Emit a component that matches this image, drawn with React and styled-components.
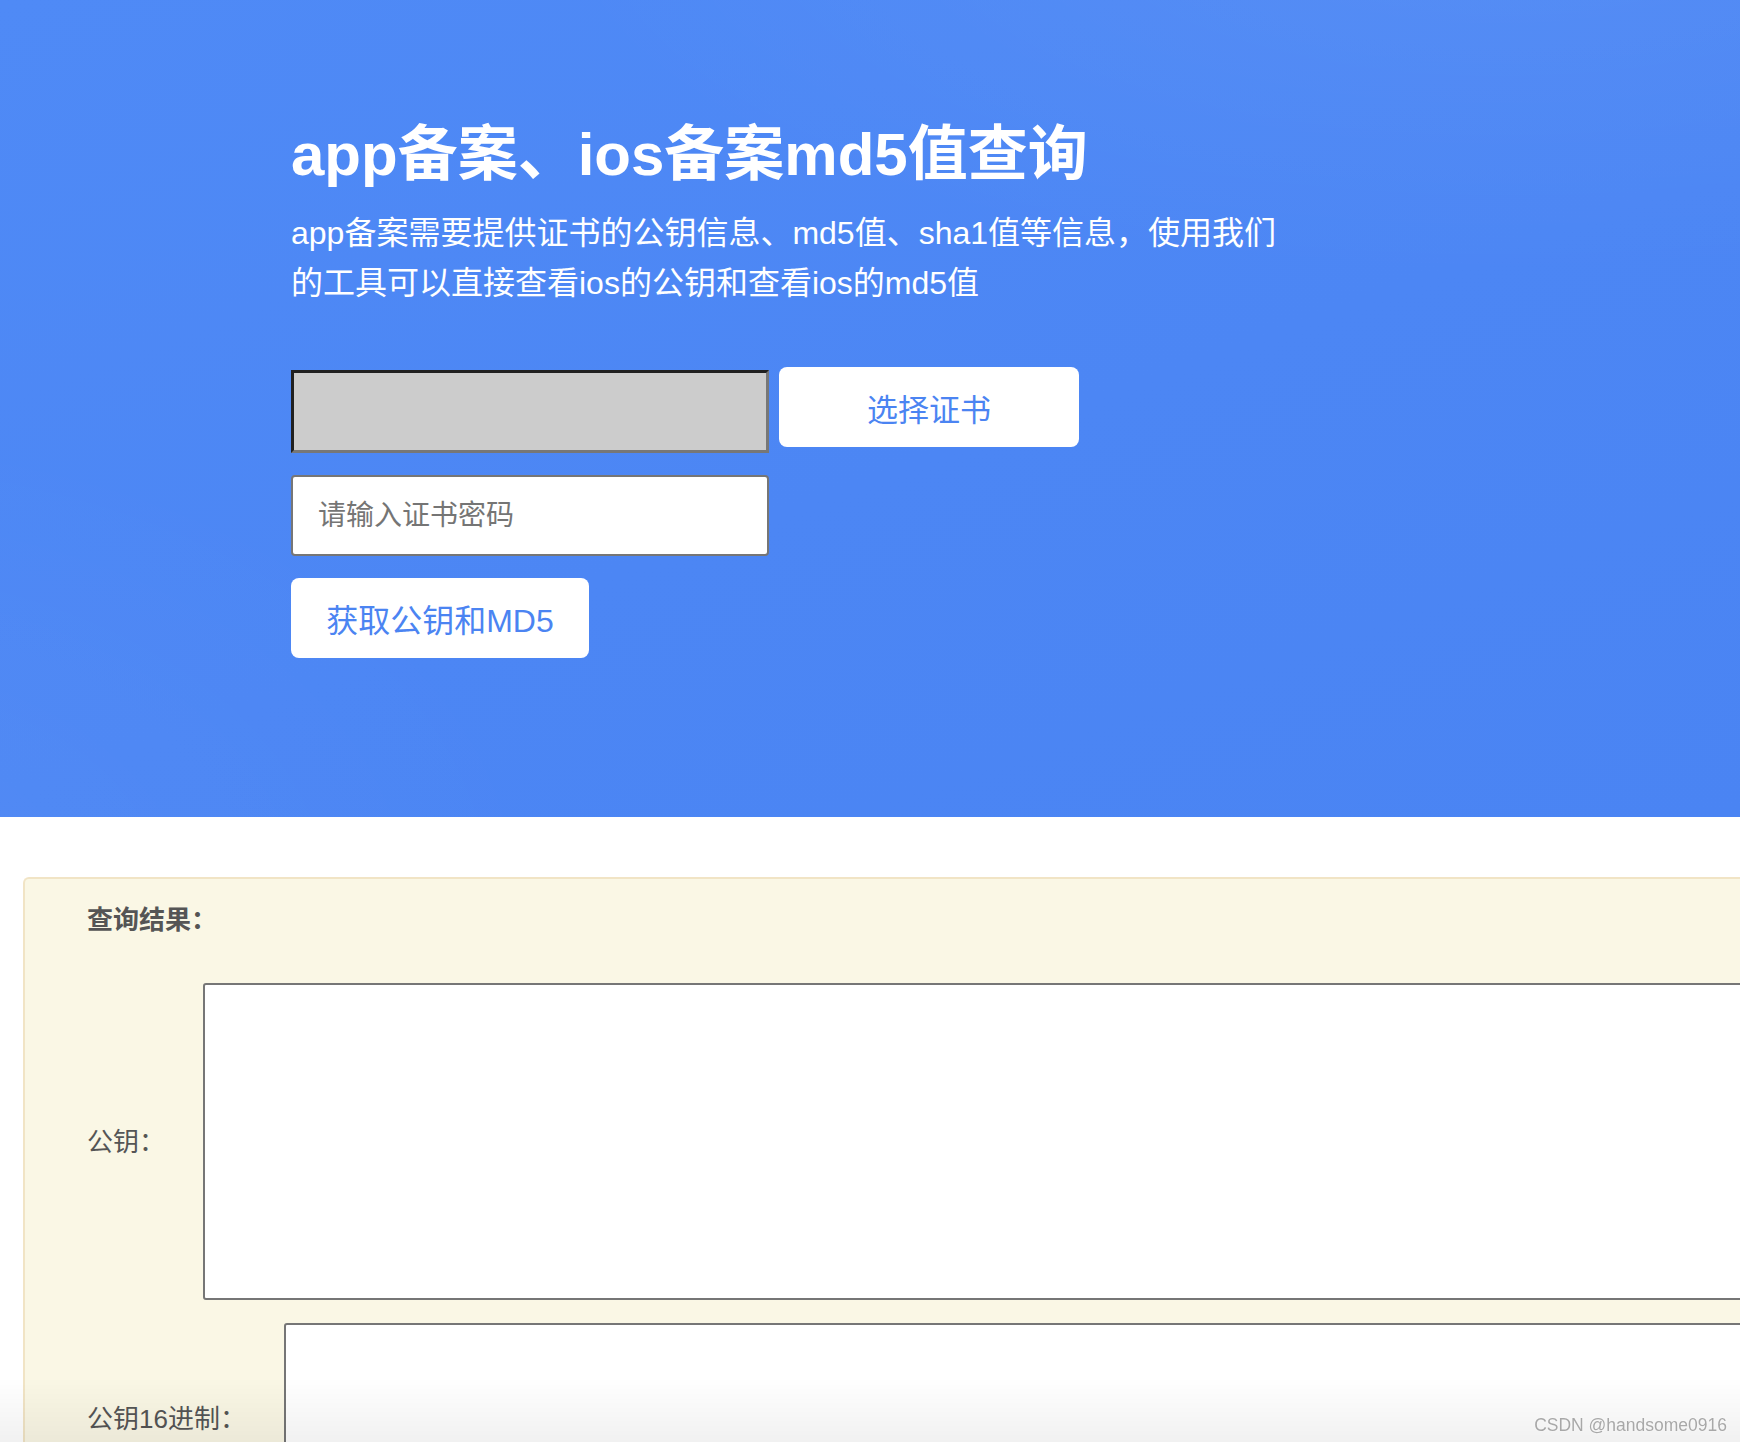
import React from "react";
import styled, { createGlobalStyle } from "styled-components";

const GlobalStyle = createGlobalStyle`
  html, body {
    margin: 0;
    padding: 0;
    overflow: hidden;
    background: #ffffff;
  }
  body {
    font-family: "Liberation Sans", "Noto Sans CJK SC", sans-serif;
  }
  * {
    box-sizing: border-box;
  }
`;

const Hero = styled.section`
  background-color: #4c87f5;
  background-image:
    radial-gradient(ellipse 1400px 520px at 1500px -80px, rgba(255, 255, 255, 0.05), rgba(255, 255, 255, 0) 70%),
    radial-gradient(ellipse 1100px 700px at -200px 900px, rgba(255, 255, 255, 0.04), rgba(255, 255, 255, 0) 70%),
    linear-gradient(160deg, #4f8af6 0%, #4c86f4 55%, #4a84f3 100%);
  padding: 119px 0 160px 291px;
  height: 817px;
`;

const Title = styled.h1`
  margin: 0;
  font-size: 60px;
  line-height: 72px;
  font-weight: 700;
  color: #ffffff;
`;

const Intro = styled.p`
  margin: 17px 0 0;
  width: 1000px;
  font-size: 32px;
  line-height: 50px;
  color: #ffffff;
`;

const Form = styled.div`
  display: flex;
  flex-direction: column;
  align-items: flex-start;
  gap: 22px;
  margin-top: 59px;
`;

const FileRow = styled.div`
  display: flex;
  align-items: flex-start;
  gap: 10px;
`;

const FileBox = styled.div`
  width: 478px;
  height: 83px;
  margin-top: 3px;
  background: #cccccc;
  border-style: solid;
  border-width: 3px;
  border-color: #202020 #777777 #777777 #202020;
`;

const Button = styled.button`
  width: ${(p) => p.$width}px;
  height: 80px;
  border: none;
  border-radius: 8px;
  background: #ffffff;
  color: #4b84f2;
  font-family: "Liberation Sans", "Noto Sans CJK SC", sans-serif;
  font-size: ${(p) => p.$size || 31}px;
  padding: 0;
  cursor: pointer;
`;

const PasswordInput = styled.input`
  width: 478px;
  height: 81px;
  border: 2px solid #767676;
  border-radius: 4px;
  padding: 0 0 0 25px;
  font-family: "Liberation Sans", "Noto Sans CJK SC", sans-serif;
  font-size: 28px;
  color: #333333;
  outline: none;

  &::placeholder {
    color: #757575;
  }
`;

const Results = styled.section`
  margin: 60px 0 0 23px;
  width: 1900px;
  background: #faf7e5;
  border-top: 2px solid #f1e4c5;
  border-left: 2px solid #f1e4c5;
  border-top-left-radius: 6px;
  padding: 23px 0 40px 62px;
  display: flex;
  flex-direction: column;
  gap: 23px;
`;

const ResultsTitle = styled.div`
  font-size: 26px;
  line-height: 36px;
  font-weight: 700;
  color: #555555;
  margin-bottom: 22px;
`;

const Row = styled.div`
  display: flex;
  align-items: center;
  gap: 38px;
`;

const Label = styled.label`
  font-size: 26px;
  line-height: 36px;
  color: #555555;
  white-space: nowrap;
`;

const Output = styled.textarea`
  width: 1600px;
  height: ${(p) => p.$height}px;
  border: 2px solid #767676;
  border-radius: 3px;
  background: #ffffff;
  resize: none;
  outline: none;
  font-family: "Liberation Mono", monospace;
  font-size: 16px;
`;

const BottomFade = styled.div`
  position: fixed;
  left: 0;
  right: 0;
  bottom: 0;
  height: 64px;
  background: linear-gradient(to bottom, rgba(0, 0, 0, 0), rgba(0, 0, 0, 0.055));
  pointer-events: none;
`;

const Watermark = styled.div`
  position: absolute;
  right: 13px;
  bottom: 6px;
  font-family: "Liberation Sans", sans-serif;
  font-size: 17.5px;
  color: #a8a8a8;
  text-shadow: 0 0 1px #ffffff;
`;

export default function App() {
  return (
    <>
      <GlobalStyle />
      <Hero>
        <Title>app备案、ios备案md5值查询</Title>
        <Intro>
          app备案需要提供证书的公钥信息、md5值、sha1值等信息，使用我们的工具可以直接查看ios的公钥和查看ios的md5值
        </Intro>
        <Form>
          <FileRow>
            <FileBox />
            <Button $width={300}>选择证书</Button>
          </FileRow>
          <PasswordInput type="password" placeholder="请输入证书密码" />
          <Button $width={298} $size={32}>获取公钥和MD5</Button>
        </Form>
      </Hero>
      <Results>
        <ResultsTitle>查询结果：</ResultsTitle>
        <Row>
          <Label>公钥：</Label>
          <Output $height={317} readOnly />
        </Row>
        <Row>
          <Label>公钥16进制：</Label>
          <Output $height={192} readOnly />
        </Row>
      </Results>
      <BottomFade>
        <Watermark>CSDN @handsome0916</Watermark>
      </BottomFade>
    </>
  );
}
